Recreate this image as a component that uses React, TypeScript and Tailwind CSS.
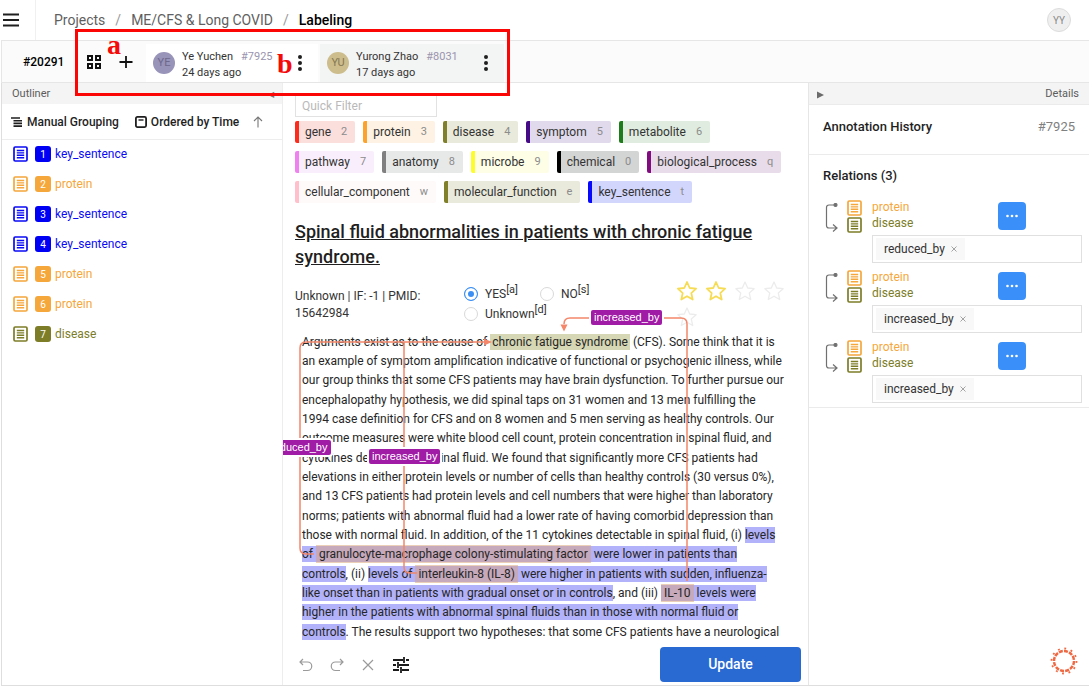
import React, { useState } from "react";

const regions = [
  { id: 1, label: "key_sentence", text: "text-[#0a0af5]", badge: "bg-[#0000f5]" },
  { id: 2, label: "protein", text: "text-[#f5a73b]", badge: "bg-[#f5a73b]" },
  { id: 3, label: "key_sentence", text: "text-[#0a0af5]", badge: "bg-[#0000f5]" },
  { id: 4, label: "key_sentence", text: "text-[#0a0af5]", badge: "bg-[#0000f5]" },
  { id: 5, label: "protein", text: "text-[#f5a73b]", badge: "bg-[#f5a73b]" },
  { id: 6, label: "protein", text: "text-[#f5a73b]", badge: "bg-[#f5a73b]" },
  { id: 7, label: "disease", text: "text-[#7d7d28]", badge: "bg-[#7d7d28]" },
];

const labelRows = [
  [
    { name: "gene", key: "2", style: "border-[#fb2c1c] bg-[#fbdfdd]" },
    { name: "protein", key: "3", style: "border-[#fba32c] bg-[#fdf2e3]" },
    { name: "disease", key: "4", style: "border-[#80802a] bg-[#e9eadb]" },
    { name: "symptom", key: "5", style: "border-[#450a85] bg-[#e0daec]" },
    { name: "metabolite", key: "6", style: "border-[#1e7d1a] bg-[#e0ecdf]" },
  ],
  [
    { name: "pathway", key: "7", style: "border-[#ee82ee] bg-[#f9effc]" },
    { name: "anatomy", key: "8", style: "border-[#808080] bg-[#e7e9e9]" },
    { name: "microbe", key: "9", style: "border-[#fdfd2c] bg-[#fefee6]" },
    { name: "chemical", key: "0", style: "border-black bg-[#d3d5d5]" },
    { name: "biological_process", key: "q", style: "border-[#800c80] bg-[#e8dcea]" },
  ],
  [
    { name: "cellular_component", key: "w", style: "border-[#ffc0cb] bg-[#fefafa]" },
    { name: "molecular_function", key: "e", style: "border-[#80802a] bg-[#e9eadb]" },
    { name: "key_sentence", key: "t", style: "border-[#0808fb] bg-[#d3d6fc]" },
  ],
];

const relations = ["reduced_by", "increased_by", "increased_by"];

function DocIcon({ className }: { className: string }) {
  return (
    <svg viewBox="0 0 15 16" className={`h-4 w-[15px] shrink-0 ${className}`} fill="none" stroke="currentColor" aria-hidden="true">
      <rect x="1" y="1" width="13" height="14" rx="1.200" strokeWidth="1.700" />
      <path d="M3.800 4.500h7.400M3.800 6.900h7.400M3.800 9.300h7.400M3.800 11.700h7.400" strokeWidth="1.400" />
    </svg>
  );
}

function Dots() {
  return (
    <svg viewBox="0 0 4 18" className="h-[18px] w-1" fill="#1f1f1f" aria-hidden="true">
      <circle cx="2" cy="3" r="2" />
      <circle cx="2" cy="9" r="2" />
      <circle cx="2" cy="15" r="2" />
    </svg>
  );
}

function Star({ on }: { on: boolean }) {
  return (
    <svg viewBox="0 0 22 22" className="size-[22px]" fill="none" stroke={on ? "#f6dc55" : "#ececec"} strokeWidth={on ? 1.8 : 1.3} strokeLinejoin="round" aria-hidden="true">
      <path d="M11 2l2.700 6 6.400.7-4.800 4.400 1.400 6.400L11 16.200l-5.700 3.300 1.400-6.400L1.900 8.700l6.400-.7z" />
    </svg>
  );
}

function Tab(props: { initials: string; avatar: string; name: string; num: string; ago: string; bg: string }) {
  return (
    <div className={`flex h-[38px] items-center pr-2 pl-[7px] ${props.bg}`}>
      <span className={`flex size-[22px] items-center justify-center rounded-full text-[11px] ${props.avatar}`}>{props.initials}</span>
      <div className="ml-[7px] pt-[3px] text-[11px] leading-4 text-[#333]">
        <div className="flex gap-2 whitespace-nowrap">
          <span>{props.name}</span>
          <span className="text-[#9a94ae]">{props.num}</span>
        </div>
        <div>{props.ago}</div>
      </div>
      <button aria-label="Annotation menu" className="ml-auto flex w-5 shrink-0 justify-center">
        <Dots />
      </button>
    </div>
  );
}

function Hl({ children }: { children: React.ReactNode }) {
  return <mark className="bg-[#b2b2fb] py-px text-inherit">{children}</mark>;
}

function Prot({ children }: { children: React.ReactNode }) {
  return <mark className="border-y border-[#ecd0b8] bg-[#c6a9bb] px-[3px] py-px text-inherit">{children}</mark>;
}

const abstractLines: React.ReactNode[][] = [
  [
    <>Arguments exist as to the cause of <mark className="bg-[#d6d7b4] px-0.5 py-px text-inherit">chronic fatigue syndrome</mark> (CFS). Some think that it is</>,
    "an example of symptom amplification indicative of functional or psychogenic illness, while",
    "our group thinks that some CFS patients may have brain dysfunction. To further pursue our",
  ],
  [
    "encephalopathy hypothesis, we did spinal taps on 31 women and 13 men fulfilling the",
    "1994 case definition for CFS and on 8 women and 5 men serving as healthy controls. Our",
    "outcome measures were white blood cell count, protein concentration in spinal fluid, and",
  ],
  [
    "cytokines detectable in spinal fluid. We found that significantly more CFS patients had",
    "elevations in either protein levels or number of cells than healthy controls (30 versus 0%),",
    "and 13 CFS patients had protein levels and cell numbers that were higher than laboratory",
  ],
  [
    "norms; patients with abnormal fluid had a lower rate of having comorbid depression than",
    <>those with normal fluid. In addition, of the 11 cytokines detectable in spinal fluid, (i) <Hl>levels</Hl></>,
    <Hl>of <Prot>granulocyte-macrophage colony-stimulating factor</Prot> were lower in patients than</Hl>,
  ],
  [
    <><Hl>controls</Hl>, (ii) <Hl>levels of <Prot>interleukin-8 (IL-8)</Prot> were higher in patients with sudden, influenza-</Hl></>,
    <><Hl>like onset than in patients with gradual onset or in controls</Hl>, and (iii) <Hl><Prot>IL-10</Prot> levels were</Hl></>,
    <Hl>higher in the patients with abnormal spinal fluids than in those with normal fluid or</Hl>,
  ],
  [<><Hl>controls</Hl>. The results support two hypotheses: that some CFS patients have a neurological</>],
];

function Choice({ label, hotkey, checked, onPick }: { label: string; hotkey: string; checked: boolean; onPick: () => void }) {
  return (
    <label className="flex h-5 items-center gap-[7px] text-[12px] text-[#333]">
      <input
        type="radio"
        name="relevance"
        checked={checked}
        onChange={onPick}
        className="size-3.5 appearance-none rounded-full border border-[#d9d9d9] bg-white checked:border-[#3a8ff5] checked:bg-[#3a8ff5] checked:shadow-[inset_0_0_0_3px_white]"
      />
      <span>
        {label}
        <sup className="text-[11px]">[{hotkey}]</sup>
      </span>
    </label>
  );
}

function RelationTag({ children, place }: { children: string; place: string }) {
  return (
    <span className={`absolute rounded-[2px] bg-[#a01ba6] px-[3px] font-['Liberation_Sans',sans-serif] text-[11px] leading-[15px] text-white ring-2 ring-white ${place}`}>
      {children}
    </span>
  );
}

export default function App() {
  const [choice, setChoice] = useState("YES");
  return (
    <div className="relative flex h-screen flex-col overflow-hidden bg-white font-[Roboto,sans-serif] text-[12px] text-[#262626]">
      <header className="flex h-10 shrink-0 items-center">
        <button aria-label="Menu" className="flex h-10 w-9 items-center border-r border-[#f0f0f0] pl-[3px]">
          <svg viewBox="0 0 16 14" className="h-3.5 w-4" stroke="#1f1f1f" strokeWidth="2" aria-hidden="true">
            <path d="M0 1.500h16M0 7h16M0 12.500h16" />
          </svg>
        </button>
        <nav aria-label="Breadcrumb" className="flex items-center gap-2.5 pl-[18px] text-[14px] text-[#5f5f5f]">
          <a href="#projects">Projects</a>
          <span className="text-[#9a9a9a]">/</span>
          <a href="#project">ME/CFS &amp; Long COVID</a>
          <span className="text-[#9a9a9a]">/</span>
          <a href="#labeling" className="font-medium text-black">Labeling</a>
        </nav>
        <button className="mr-[18px] ml-auto flex size-6 items-center justify-center rounded-full border border-[#dcdcdc] bg-[#efefef] text-[10px] text-[#8a8a8a]">YY</button>
      </header>

      <div className="ml-px flex h-[43px] shrink-0 items-end border-y border-l border-[#e6e6e6] bg-[#fbfbfb]">
        <div className="flex h-[41px] flex-1 items-center">
          <span className="w-[84px] pl-[21px] font-medium text-black">#20291</span>
          <button aria-label="View all annotations" className="flex w-4">
            <svg viewBox="0 0 16 16" className="size-4" fill="none" stroke="#111" strokeWidth="2" aria-hidden="true">
              <path d="M2 2h4v4H2zM10 2h4v4h-4zM2 10h4v4H2zM10 10h4v4h-4z" />
            </svg>
          </button>
          <button aria-label="Create annotation" className="ml-4 flex w-4">
            <svg viewBox="0 0 16 16" className="size-4" stroke="#111" strokeWidth="1.800" aria-hidden="true">
              <path d="M8 2v12M1.500 8h13" />
            </svg>
          </button>
          <div className="ml-3 flex gap-0.5 self-end">
            <Tab initials="YE" avatar="bg-[#9893b8] text-[#6d688c]" name="Ye Yuchen" num="#7925" ago="24 days ago" bg="w-[172px] bg-white" />
            <Tab initials="YU" avatar="bg-[#cdbd8c] text-[#857852]" name="Yurong Zhao" num="#8031" ago="17 days ago" bg="w-[184px] bg-[#f3f4f4]" />
          </div>
        </div>
      </div>

      <main className="ml-px flex min-h-0 flex-1 border-b border-l border-[#dedede]">
        <aside className="w-[281px] shrink-0 border-r border-[#ededed]">
          <div className="flex h-[21px] items-center justify-between bg-[#f4f4f4] pt-0.5 pr-2 pl-2.5 text-[11px] text-[#5c5c5c]">
            Outliner
            <button aria-label="Collapse outliner" className="text-[8px] text-[#777]">◀</button>
          </div>
          <div className="flex h-9 items-center border-b border-[#ededed] pl-[9px] font-medium text-[#1f1f1f]">
            <button className="flex items-center gap-[5px]">
              <svg viewBox="0 0 11 10" className="h-2.5 w-[11px]" stroke="#1f1f1f" strokeWidth="1.600" aria-hidden="true">
                <path d="M0 1h9M2.500 3.700h8.500M2.500 6.400h8.500M2.500 9.100h8.500" />
              </svg>
              Manual Grouping
            </button>
            <button className="ml-4 flex items-center gap-1">
              <svg viewBox="0 0 12 12" className="size-3" fill="none" stroke="#1f1f1f" strokeWidth="1.800" aria-hidden="true">
                <rect x="0.900" y="0.900" width="10.200" height="10.200" rx="1.500" />
                <path d="M3.500 4h5" strokeWidth="1.400" />
              </svg>
              Ordered by Time
            </button>
            <button aria-label="Sort ascending" className="ml-3.5">
              <svg viewBox="0 0 10 12" className="h-3 w-2.5" fill="none" stroke="#777" strokeWidth="1.100" aria-hidden="true">
                <path d="M5 11.500V1M1 5l4-4 4 4" />
              </svg>
            </button>
          </div>
          <ul className="-mt-px pl-[11px]">
            {regions.map((r) => (
              <li key={r.id} className={`flex h-[30px] items-center ${r.text}`}>
                <DocIcon className="" />
                <span className={`ml-[7px] flex size-4 items-center justify-center rounded-[3px] text-[10px] text-white ${r.badge}`}>{r.id}</span>
                <span className="ml-1">{r.label}</span>
              </li>
            ))}
          </ul>
        </aside>

        <section className="relative flex min-w-0 flex-1 flex-col overflow-hidden pl-3">
          <input
            aria-label="Quick Filter"
            placeholder="Quick Filter"
            className="mt-3 h-[22px] w-[142px] shrink-0 border border-[#e2e2e2] px-1.5 text-[12px] placeholder:text-[#b9b9b9]"
          />
          <div className="mt-1 flex flex-col gap-2">
            {labelRows.map((row, i) => (
              <div key={i} className="flex gap-2">
                {row.map((l) => (
                  <button key={l.name} className={`flex h-[22px] items-center gap-2.5 rounded-[2px] border-l-4 pr-2 pl-1.5 whitespace-nowrap text-[#333] ${l.style}`}>
                    {l.name}
                    <span className="text-[11px] text-[#8c8c8c]">{l.key}</span>
                  </button>
                ))}
              </div>
            ))}
          </div>

          <h1 className="mt-4 max-w-[500px] text-[18px] leading-[25px] font-medium text-[#1f1f1f] underline">
            Spinal fluid abnormalities in patients with chronic fatigue syndrome.
          </h1>

          <div className="mt-[11px] flex h-[53px] shrink-0 items-start">
            <p className="mt-2 w-[169px] pr-6 leading-[17px] text-[#333]">Unknown | IF: -1 | PMID: 15642984</p>
            <fieldset className="mt-1 flex w-[204px] flex-wrap gap-x-[22px]">
              <legend className="sr-only">Relevance</legend>
              <Choice label="YES" hotkey="a" checked={choice === "YES"} onPick={() => setChoice("YES")} />
              <Choice label="NO" hotkey="s" checked={choice === "NO"} onPick={() => setChoice("NO")} />
              <Choice label="Unknown" hotkey="d" checked={choice === "Unknown"} onPick={() => setChoice("Unknown")} />
            </fieldset>
            <div className="ml-2 flex w-[120px] flex-wrap gap-x-[7px] gap-y-1">
              {[1, 2, 3, 4, 5].map((n) => (
                <button key={n} aria-label={`Rate ${n}`}>
                  <Star on={n <= 2} />
                </button>
              ))}
            </div>
          </div>

          <div className="shrink-0 space-y-px pl-[7px] leading-[19px] whitespace-nowrap">
            {abstractLines.map((group, g) => (
              <div key={g}>
                {group.map((line, i) => (
                  <div key={i}>{line}</div>
                ))}
              </div>
            ))}
          </div>

          <div className="pointer-events-none absolute top-0 left-0 h-[603px] w-[525px]">
            <svg viewBox="283 83 525 603" className="absolute h-[603px] w-[525px]" fill="none" stroke="#f4866a" strokeWidth="1.500" aria-hidden="true">
              <path d="M484 342H306q-6 0-6 6v200q0 6 6 6h8" />
              <path d="M404 342v225q0 6 6 6h7" />
              <path d="M564 324q0-6 6-6h20M662 318h19q6 0 6 6v257" />
              <path d="M484 338.500l8 3.500-8 3.500zM560.500 324.500h7l-3.500 7z" fill="#f4866a" stroke="none" />
            </svg>
            <RelationTag place="top-[227px] left-[308px]">increased_by</RelationTag>
            <RelationTag place="top-[357px] -left-[16px]">reduced_by</RelationTag>
            <RelationTag place="top-[366px] left-[86px]">increased_by</RelationTag>
          </div>

          <footer className="mt-auto mb-[3px] flex shrink-0 items-center pr-[7px]">
            <div className="flex items-center gap-[17px] pl-1 text-[#9a9a9a]">
              <button aria-label="Undo">
                <svg viewBox="0 0 14 14" className="size-3.5" fill="none" stroke="currentColor" strokeWidth="1.200" aria-hidden="true">
                  <path d="M4 1L1 4l3 3M1 4h7.500a4 4 0 010 8.500H4" />
                </svg>
              </button>
              <button aria-label="Redo">
                <svg viewBox="0 0 14 14" className="size-3.5" fill="none" stroke="currentColor" strokeWidth="1.200" aria-hidden="true">
                  <path d="M10 1l3 3-3 3M13 4H5.500a4 4 0 000 8.500H10" />
                </svg>
              </button>
              <button aria-label="Reset">
                <svg viewBox="0 0 14 14" className="size-3.5" fill="none" stroke="currentColor" strokeWidth="1.200" aria-hidden="true">
                  <path d="M2 2l10 10M12 2L2 12" />
                </svg>
              </button>
              <button aria-label="Settings">
                <svg viewBox="0 0 18 16" className="h-4 w-[18px]" fill="none" stroke="#1a1a1a" strokeWidth="1.800" aria-hidden="true">
                  <path d="M1 3h10M14 3h3M12 0v6M1 8h3M7 8h10M6 5v6M1 13h6M10 13h7M9 10v6" />
                </svg>
              </button>
            </div>
            <button className="ml-auto h-[35px] w-[141px] rounded-[4px] bg-[#2869d2] text-[14px] font-medium text-white">Update</button>
          </footer>
        </section>

        <aside className="w-[281px] shrink-0 border-l border-[#e6e6e6]">
          <div className="flex h-[22px] items-center justify-between border-b border-[#ebebeb] bg-[#f4f4f4] pt-0.5 pr-2.5 pl-2 text-[11px] text-[#5c5c5c]">
            <button aria-label="Collapse details">
              <svg viewBox="0 0 7 8" className="h-2 w-[7px]" fill="#6b6b6b" aria-hidden="true">
                <path d="M0 0.500l7 3.500-7 3.500z" />
              </svg>
            </button>
            Details
          </div>
          <div className="flex h-[50px] justify-between border-b border-[#ebebeb] px-3.5 pt-3 text-[13px] leading-[19px]">
            <h2 className="font-medium text-[#1f1f1f]">Annotation History</h2>
            <span className="text-[#808080]">#7925</span>
          </div>
          <div className="border-b border-[#ebebeb] pt-3 pr-[7px] pb-1">
            <h2 className="mb-3.5 pl-3.5 text-[13px] leading-[18px] font-medium text-[#1f1f1f]">Relations (3)</h2>
            <div className="space-y-1.5">
              {relations.map((rel, i) => (
                <div key={i}>
                  <div className="flex h-9 pl-4">
                    <svg viewBox="0 0 14 32" className="mt-1 h-8 w-3.5" fill="none" stroke="#707070" strokeWidth="1.200" aria-hidden="true">
                      <path d="M10 2H4q-2.500 0-2.500 2.500v18q0 2.500 2.500 2.500h8M8 21.500l4 3.500-4 3.500" />
                      <circle cx="10.500" cy="2" r="1.500" fill="#707070" />
                    </svg>
                    <div className="ml-2 flex flex-col gap-px pt-px">
                      <DocIcon className="text-[#f5a73b]" />
                      <DocIcon className="text-[#7d7d28]" />
                    </div>
                    <div className="ml-2.5 leading-4">
                      <div className="text-[#f5a73b]">protein</div>
                      <div className="text-[#7d7d28]">disease</div>
                    </div>
                    <button aria-label="Relation actions" className="mt-[3px] mr-14 ml-auto flex size-7 items-center justify-center rounded-[4px] bg-[#3a90f8]">
                      <svg viewBox="0 0 12 4" className="h-1 w-3" fill="white" aria-hidden="true">
                        <circle cx="1.500" cy="2" r="1.300" />
                        <circle cx="6" cy="2" r="1.300" />
                        <circle cx="10.500" cy="2" r="1.300" />
                      </svg>
                    </button>
                  </div>
                  <div className="ml-[63px] flex h-7 items-center border border-[#e0e0e0] pl-[3px]">
                    <span className="flex h-[22px] items-center gap-1.5 bg-[#f8f8f8] px-2 text-[#333]">
                      {rel}
                      <button aria-label={`Remove ${rel}`}>
                        <svg viewBox="0 0 6 6" className="size-1.5" stroke="#999" strokeWidth="0.900" aria-hidden="true">
                          <path d="M0.500 0.500l5 5M5.500 0.500l-5 5" />
                        </svg>
                      </button>
                    </span>
                  </div>
                </div>
              ))}
            </div>
          </div>
        </aside>
      </main>

      <div className="pointer-events-none absolute top-[29px] left-[75px] h-[67px] w-[435px] border-[3px] border-[#fb0505] font-['Liberation_Serif',serif] text-[28px] leading-8 font-bold text-[#f50a0a]">
        <span className="absolute top-[-3px] left-[29px]">a</span>
        <span className="absolute top-[16px] left-[199px]">b</span>
      </div>
      <button aria-label="Help" className="absolute right-[11px] bottom-[11px]">
        <svg viewBox="0 0 28 28" className="size-7" fill="none" stroke="#ee6a45" aria-hidden="true">
          <circle cx="14" cy="14" r="10" strokeWidth="2.500" strokeDasharray="4 1.200" />
          <circle cx="14" cy="14" r="12.500" strokeWidth="1.800" strokeDasharray="1.900 4.640" />
        </svg>
      </button>
    </div>
  );
}
